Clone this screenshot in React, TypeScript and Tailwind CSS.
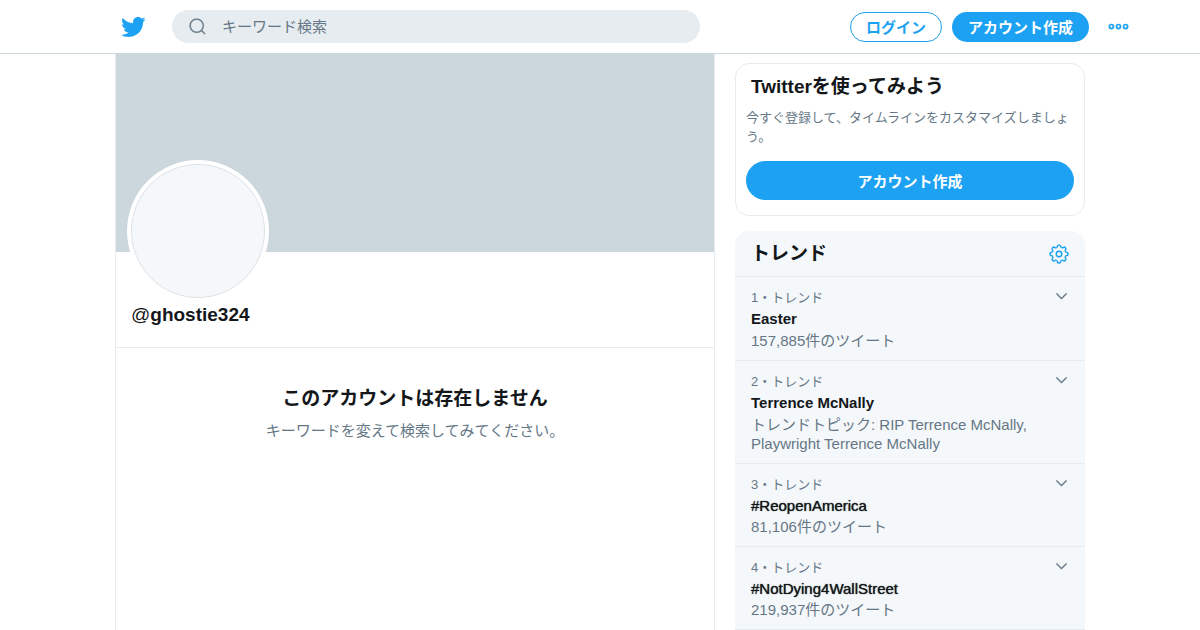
import clsx from 'clsx';

const trends = [
  { rank: 1, name: 'Easter', detail: '157,885件のツイート' },
  {
    rank: 2,
    name: 'Terrence McNally',
    detail: 'トレンドトピック: RIP Terrence McNally, Playwright Terrence McNally',
  },
  { rank: 3, name: '#ReopenAmerica', detail: '81,106件のツイート' },
  { rank: 4, name: '#NotDying4WallStreet', detail: '219,937件のツイート' },
];

function TwitterLogo() {
  return (
    <svg viewBox="0 0 24 24" className="size-[26px] fill-[#1da1f2]">
      <path d="M23.643 4.937c-.835.37-1.732.62-2.675.733.962-.576 1.7-1.49 2.048-2.578-.9.534-1.897.922-2.958 1.13-.85-.904-2.06-1.47-3.4-1.47-2.572 0-4.658 2.086-4.658 4.66 0 .364.042.718.12 1.06-3.873-.195-7.304-2.05-9.602-4.868-.4.69-.63 1.49-.63 2.342 0 1.616.823 3.043 2.072 3.878-.764-.025-1.482-.234-2.11-.583v.06c0 2.257 1.605 4.14 3.737 4.568-.392.106-.803.162-1.227.162-.3 0-.593-.028-.877-.082.593 1.85 2.313 3.198 4.352 3.234-1.595 1.25-3.604 1.995-5.786 1.995-.376 0-.747-.022-1.112-.065 2.062 1.323 4.51 2.093 7.14 2.093 8.57 0 13.255-7.098 13.255-13.254 0-.2-.005-.402-.014-.602.91-.658 1.7-1.477 2.323-2.41z" />
    </svg>
  );
}

function SearchIcon() {
  return (
    <svg
      viewBox="0 0 24 24"
      className="size-[19px] shrink-0 fill-[#657786] stroke-[#657786]"
      strokeWidth="0.3"
    >
      <path d="M21.53 20.47l-3.66-3.66C19.195 15.24 20 13.214 20 11c0-4.97-4.03-9-9-9s-9 4.03-9 9 4.03 9 9 9c2.215 0 4.24-.804 5.808-2.13l3.66 3.66c.147.146.34.22.53.22s.385-.073.53-.22c.295-.293.295-.767.002-1.06zM3.5 11c0-4.135 3.365-7.5 7.5-7.5s7.5 3.365 7.5 7.5-3.365 7.5-7.5 7.5-7.5-3.365-7.5-7.5z" />
    </svg>
  );
}

function MoreIcon() {
  return (
    <svg
      viewBox="0 0 24 24"
      className="size-[23px] fill-none stroke-[#1da1f2]"
      strokeWidth="1.8"
    >
      <circle cx="4.6" cy="12" r="2.1" />
      <circle cx="12" cy="12" r="2.1" />
      <circle cx="19.4" cy="12" r="2.1" />
    </svg>
  );
}

function ChevronIcon() {
  return (
    <svg
      viewBox="0 0 24 24"
      className="size-[15px] fill-[#657786] stroke-[#657786]"
      strokeWidth="0.4"
    >
      <path d="M20.207 7.043c-.39-.39-1.023-.39-1.414 0L12 13.836 5.207 7.043c-.39-.39-1.023-.39-1.414 0-.39.39-.39 1.023 0 1.414l7.5 7.5c.195.196.45.294.707.294s.512-.098.707-.293l7.5-7.5c.39-.39.39-1.022 0-1.413z" />
    </svg>
  );
}

function GearIcon() {
  return (
    <svg
      viewBox="0 0 24 24"
      className="size-[22px] fill-none stroke-[#1da1f2]"
      strokeWidth="1.6"
      strokeLinejoin="round"
    >
      <circle cx="12" cy="12" r="3" />
      {[0, 45, 90, 135, 180, 225, 270, 315].map((angle) => (
        <path
          key={angle}
          transform={`rotate(${angle} 12 12)`}
          d="M9.1 5.1C9.9 4.8 10.2 4.3 10.3 3.5Q10.5 2.3 11.5 2.3H12.5Q13.5 2.3 13.7 3.5C13.8 4.3 14.1 4.8 14.9 5.1"
        />
      ))}
    </svg>
  );
}

function Header() {
  return (
    <header className="border-b border-[#ccd6dd] bg-white">
      <div className="mx-auto flex h-[53px] max-w-[1100px] items-center pr-5 pl-[70px]">
        <a href="#" aria-label="Twitter">
          <TwitterLogo />
        </a>
        <label className="ml-[26px] flex h-[33px] max-w-[528px] grow items-center gap-[15px] rounded-full bg-[#e6ecf0] px-4">
          <SearchIcon />
          <input
            type="search"
            aria-label="キーワード検索"
            placeholder="キーワード検索"
            className="grow bg-transparent pt-[2px] text-[15px] outline-none placeholder:text-[#657786]"
          />
        </label>
        <div className="ml-auto flex items-center gap-[10px] whitespace-nowrap">
          <button className="h-[30px] rounded-full border border-[#1da1f2] px-[15px] pt-[2px] text-[15px] leading-5 font-bold text-[#1da1f2]">
            ログイン
          </button>
          <button className="h-[30px] rounded-full bg-[#1da1f2] px-4 pt-[2px] text-[15px] leading-5 font-bold text-white">
            アカウント作成
          </button>
          <button aria-label="もっと見る" className="ml-2">
            <MoreIcon />
          </button>
        </div>
      </div>
    </header>
  );
}

function Profile() {
  return (
    <main className="max-w-[600px] grow border-x border-[#e6ecf0]">
      <div className="h-[198px] bg-[#ccd6dd]" />
      <div className="border-b border-[#e6ecf0] px-[15px] pb-5">
        <div className="-mt-[92px] -ml-1 size-[142px] rounded-full bg-white p-1">
          <div className="size-full rounded-full border border-[#dfe2e5] bg-[#f5f8fa]" />
        </div>
        <h1 className="mt-px text-[19px] leading-6 font-bold text-[#14171a]">
          <span className="font-normal">@</span>ghostie324
        </h1>
      </div>
      <div className="px-5 pt-[39px] text-center">
        <h2 className="text-[19px] leading-6 font-bold text-[#14171a]">
          このアカウントは存在しません
        </h2>
        <p className="mt-[10px] text-[15px] leading-5 text-[#657786]">
          キーワードを変えて検索してみてください。
        </p>
      </div>
    </main>
  );
}

function SignUpCard() {
  return (
    <section className="rounded-[14px] border border-[#e6ecf0] px-[10px] pt-[11px] pb-[15px]">
      <h2 className="px-[5px] text-[19px] leading-6 font-bold text-[#14171a]">
        Twitterを使ってみよう
      </h2>
      <p className="mt-[9px] text-[13px] leading-[19px] text-[#657786]">
        今すぐ登録して、タイムラインをカスタマイズしましょう。
      </p>
      <button className="mt-[15px] h-[39px] w-full rounded-full bg-[#1da1f2] pt-[2px] text-[15px] leading-5 font-bold text-white">
        アカウント作成
      </button>
    </section>
  );
}

function Trend({ trend }: any) {
  const isHashtag = trend.name.startsWith('#');
  return (
    <li className="border-b border-[#e6ecf0] px-4 pt-[11px] pb-[10px]">
      <div className="flex items-start justify-between">
        <span className="text-[13px] leading-5 text-[#657786]">
          {trend.rank}・トレンド
        </span>
        <button aria-label="その他" className="mt-px">
          <ChevronIcon />
        </button>
      </div>
      <a
        href="#"
        className={clsx(
          'mt-px block text-[15px] text-[#14171a]',
          isHashtag
            ? 'leading-[19px] [text-shadow:0_0_1px_#14171a]'
            : 'leading-5 font-bold'
        )}
      >
        {trend.name}
      </a>
      <p className="mt-[2px] text-[15px] leading-[19px] text-[#657786]">
        {trend.detail}
      </p>
    </li>
  );
}

export default function App() {
  return (
    <div className="flex h-screen flex-col overflow-hidden bg-white font-['Liberation_Sans','Noto_Sans_CJK_JP',sans-serif]">
      <Header />
      <div className="mx-auto flex min-h-0 w-full max-w-[970px] grow gap-5">
        <Profile />
        <aside className="flex w-[350px] shrink-0 flex-col gap-[15px] pt-[9px]">
          <SignUpCard />
          <section className="rounded-t-[14px] bg-[#f5f8fa]">
            <div className="flex h-[46px] items-center justify-between border-b border-[#e6ecf0] pr-[15px] pl-4">
              <h2 className="pt-[2px] text-[19px] font-bold text-[#14171a]">
                トレンド
              </h2>
              <button aria-label="設定">
                <GearIcon />
              </button>
            </div>
            <ul>
              {trends.map((trend) => (
                <Trend key={trend.rank} trend={trend} />
              ))}
            </ul>
          </section>
        </aside>
      </div>
    </div>
  );
}
